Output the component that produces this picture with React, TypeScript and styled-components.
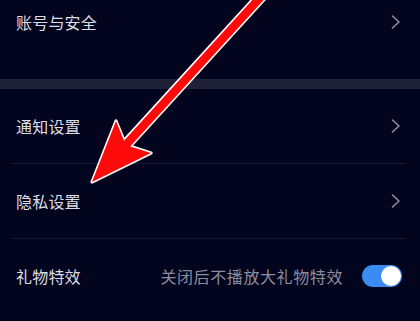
import React from "react";
import styled, { createGlobalStyle } from "styled-components";

const GlobalStyle = createGlobalStyle`
  html, body {
    margin: 0;
    padding: 0;
    background: #03051f;
  }
  body {
    font-family: "Noto Sans CJK SC", "Noto Sans", sans-serif;
    -webkit-font-smoothing: antialiased;
  }
`;

export default function App() {
  const [giftFx, setGiftFx] = React.useState(true);

  return (
    <>
      <GlobalStyle />
      <Page>
        <Group $tail>
          <Row $compact>
            <Title>账号与安全</Title>
            <Chevron />
          </Row>
        </Group>
        <SectionGap />
        <Group>
          <Row>
            <Title>通知设置</Title>
            <Chevron />
          </Row>
          <Divider />
          <Row>
            <Title>隐私设置</Title>
            <Chevron />
          </Row>
          <Divider />
          <Row>
            <Title>礼物特效</Title>
            <RowRight>
              <Hint>关闭后不播放大礼物特效</Hint>
              <Switch $on={giftFx} onClick={() => setGiftFx(!giftFx)}>
                <Knob $on={giftFx} />
              </Switch>
            </RowRight>
          </Row>
        </Group>
        <PointerArrow />
      </Page>
    </>
  );
}

function Chevron() {
  return (
    <ChevronIcon width="10" height="14" viewBox="0 0 10 14">
      <polyline points="1.5,1 8,7 1.5,13" />
    </ChevronIcon>
  );
}

// red annotation arrow over the list
function PointerArrow() {
  return (
    <ArrowLayer width="420" height="321" viewBox="0 0 420 321">
      <polygon
        points="92,182 151,153 130.2,146.4 271.7,-8.8 265.5,-14.4 124,140.7 116,121"
        fill="#ff0a0a"
        stroke="#ffffff"
        strokeWidth="3.2"
        strokeLinejoin="round"
        paintOrder="stroke"
      />
    </ArrowLayer>
  );
}

const Page = styled.div`
  position: relative;
  width: 420px;
  height: 321px;
  overflow: hidden;
  background: #03051f;
`;

const Group = styled.div<{ $tail?: boolean }>`
  display: flex;
  flex-direction: column;
  padding-bottom: ${(p) => (p.$tail ? "35px" : "0")};
`;

const Row = styled.div<{ $compact?: boolean }>`
  display: flex;
  align-items: center;
  justify-content: space-between;
  height: ${(p) => (p.$compact ? "44px" : "74px")};
  padding: 0 18px 0 16px;
`;

const Title = styled.span`
  font-size: 16px;
  color: #dcdde5;
  letter-spacing: 0.2px;
`;

const RowRight = styled.div`
  display: flex;
  align-items: center;
  gap: 19px;
`;

const Hint = styled.span`
  font-size: 16px;
  color: #8b8d9c;
  letter-spacing: 0.6px;
`;

const ChevronIcon = styled.svg`
  margin-right: 1px;
  polyline {
    fill: none;
    stroke: #8d8fa1;
    stroke-width: 1.6;
    stroke-linecap: round;
    stroke-linejoin: round;
  }
`;

const Switch = styled.button<{ $on: boolean }>`
  position: relative;
  width: 40px;
  height: 22px;
  border: none;
  border-radius: 11px;
  padding: 0;
  background: ${(p) => (p.$on ? "#3b8cf2" : "#3a3d52")};
  cursor: pointer;
`;

const Knob = styled.span<{ $on: boolean }>`
  position: absolute;
  top: 1px;
  left: ${(p) => (p.$on ? "19px" : "1px")};
  width: 20px;
  height: 20px;
  border-radius: 50%;
  background: #ffffff;
`;

const SectionGap = styled.div`
  height: 10px;
  background: #1e2138;
`;

const Divider = styled.div`
  height: 1px;
  margin: 0 14px 0 11px;
  background: #171a30;
`;

const ArrowLayer = styled.svg`
  position: absolute;
  left: 0;
  top: 0;
  pointer-events: none;
`;
